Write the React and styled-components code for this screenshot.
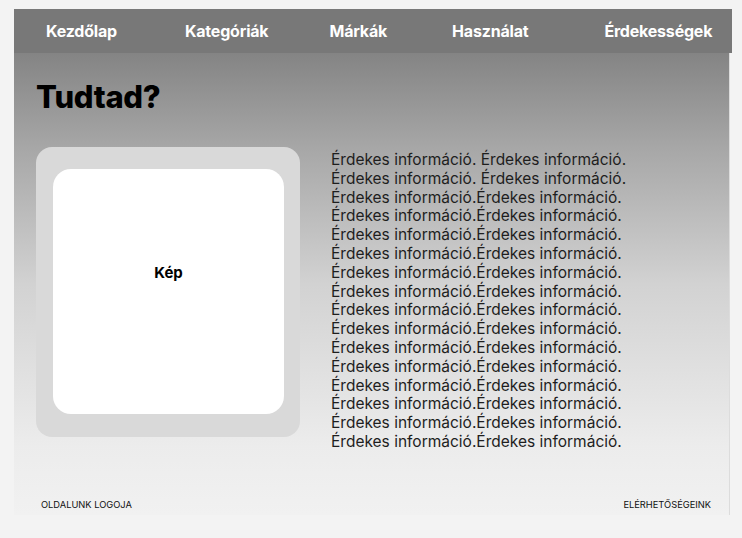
import React from "react";
import styled, { createGlobalStyle } from "styled-components";

const GlobalStyle = createGlobalStyle`
  body {
    margin: 0;
    background: #f3f3f3;
    font-family: Inter, "Liberation Sans", sans-serif;
  }
`;

const Page = styled.div`
  padding: 9px 10px 0 14px;
  width: 718px;
`;

const Nav = styled.nav`
  height: 44px;
  background: #787878;
  display: flex;
  align-items: center;
  padding: 0 19px 0 32px;
`;

const NavItem = styled.a`
  color: #fff;
  font-weight: 700;
  font-size: 16px;
  letter-spacing: -0.2px;
  text-decoration: none;
  margin-left: ${(p) => p.$gap || 0}px;
  white-space: nowrap;
`;

const Main = styled.main`
  width: 716px;
  height: 462px;
  box-sizing: border-box;
  background: linear-gradient(180deg, #848484 0%, #a6a6a6 20%, #d2d2d2 50%, #ececec 85%, #f1f1f1 100%);
  border-right: 1px solid #dcdcdc;
  display: flex;
  flex-direction: column;
  padding: 26px 18px 0 22px;
`;

const Title = styled.h1`
  margin: 0 0 32px 0;
  font-size: 31px;
  font-weight: 800;
  letter-spacing: -0.3px;
  line-height: 36px;
  color: #000;
`;

const Row = styled.div`
  display: flex;
  gap: 31px;
  align-items: flex-start;
`;

const Frame = styled.div`
  width: 264px;
  height: 290px;
  box-sizing: border-box;
  background: #d9d9d9;
  border-radius: 16px;
  padding: 22px 16px 23px 17px;
`;

const Picture = styled.div`
  height: 100%;
  background: #fff;
  border-radius: 18px;
  display: flex;
  justify-content: center;
  padding-top: 94px;
  box-sizing: border-box;
  font-weight: 700;
  font-size: 15px;
  color: #000;
`;

const Info = styled.div`
  padding-top: 4px;
  font-size: 15.5px;
  line-height: 18.8px;
  color: #1e1e1e;
`;

const Footer = styled.footer`
  margin-top: auto;
  display: flex;
  justify-content: space-between;
  padding: 0 0 5px 5px;
  font-size: 9.3px;
  color: #111;
  text-transform: uppercase;
`;

const items = [
  { t: "Kezdőlap", gap: 0 },
  { t: "Kategóriák", gap: 68 },
  { t: "Márkák", gap: 61 },
  { t: "Használat", gap: 65 },
  { t: "Érdekességek", gap: 76 },
];
const lines = [
  "Érdekes információ. Érdekes információ.",
  "Érdekes információ. Érdekes információ.",
  ...Array(14).fill("Érdekes információ.Érdekes információ."),
];

export default function App() {
  return (
    <Page>
      <GlobalStyle />
      <Nav>
        {items.map((it) => (
          <NavItem key={it.t} $gap={it.gap}>
            {it.t}
          </NavItem>
        ))}
      </Nav>
      <Main>
        <Title>Tudtad?</Title>
        <Row>
          <Frame>
            <Picture>Kép</Picture>
          </Frame>
          <Info>
            {lines.map((l, i) => (
              <div key={i}>{l}</div>
            ))}
          </Info>
        </Row>
        <Footer>
          <span>Oldalunk logoja</span>
          <span>Elérhetőségeink</span>
        </Footer>
      </Main>
    </Page>
  );
}
